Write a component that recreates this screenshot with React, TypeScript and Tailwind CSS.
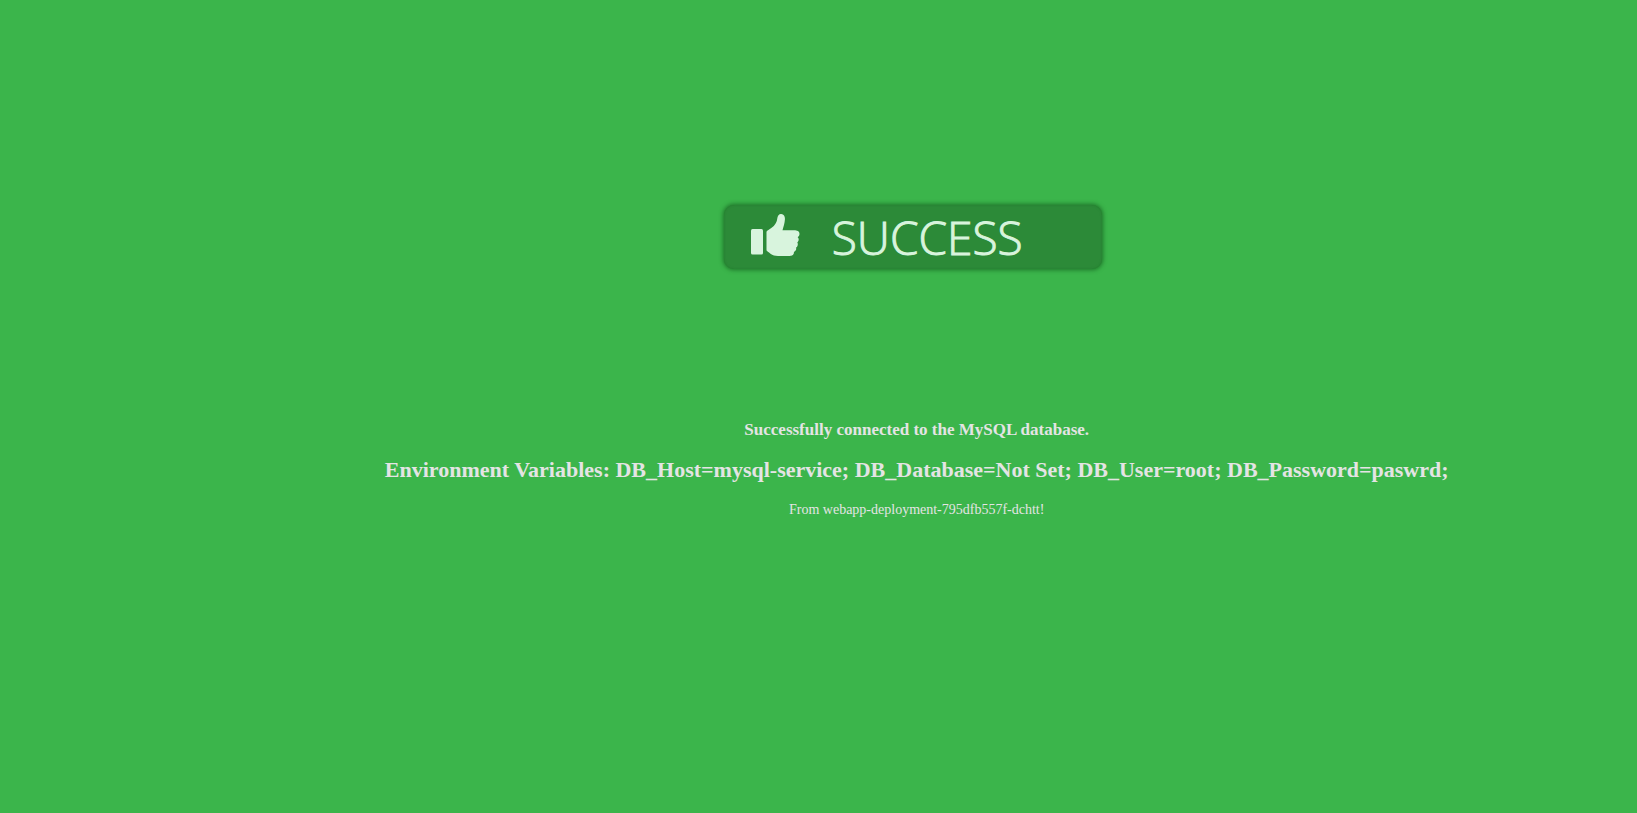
function ThumbsUp() {
  return (
    <svg viewBox="0 0 49 43" className="mb-1 h-[43px] w-[49px] shrink-0" fill="#d8f4dd" aria-hidden="true">
      <rect x="0" y="15" width="12" height="25.500" rx="1.500" />
      <path d="M15.500 18 Q15.500 16.800 17 16.200 C22 13.500 24.500 10.500 25.800 7 C26.500 4.500 26.300 0.500 29.700 0 C32.800 -0.200 34.200 2.500 33.900 5.500 C33.700 9.500 32.500 12.500 31.500 16.200 H43 C46 16.200 48.500 17 48.500 19.800 C48.500 21.500 47.800 22.500 46.700 23.300 C48.200 24.500 48 27.300 46.300 28.500 C47.300 30 46.800 32.700 45 33.700 C45.700 35.500 44.700 37.200 43 38 C43 40.500 41.500 42 38.500 42 H27 C22.500 42 20.500 40.500 18 38.500 L16.300 37.300 Q15.500 36.800 15.500 35.800 Z" />
    </svg>
  );
}

export default function App() {
  return (
    <main className="min-h-screen bg-[#3bb54b] pt-[205px] pl-[12%] text-center font-['Liberation_Serif',serif] text-[#e4e4e4]">
      <div className="flex justify-center pr-2">
        <div role="status" className="flex h-16 w-[378px] items-center rounded-[10px] bg-[#2c8a38] pl-[27px] text-[#d8f4dd] shadow-[0_0_4px_1px_#1f742a,inset_0_0_2px_#237c2e]">
          <ThumbsUp />
          <span className="ml-8 font-['Open_Sans',sans-serif] text-[46px] leading-[64px] font-light [-webkit-text-stroke:1px_#d8f4dd]">SUCCESS</span>
        </div>
      </div>
      <h3 className="mt-[151px] text-[17px] leading-5 font-bold">Successfully connected to the MySQL database.</h3>
      <h1 className="mt-4 text-[22px] leading-7 font-bold">
        Environment Variables: DB_Host=mysql-service; DB_Database=Not Set; DB_User=root; DB_Password=paswrd;
      </h1>
      <p className="mt-4 text-[14px] leading-5">From webapp-deployment-795dfb557f-dchtt!</p>
    </main>
  );
}
